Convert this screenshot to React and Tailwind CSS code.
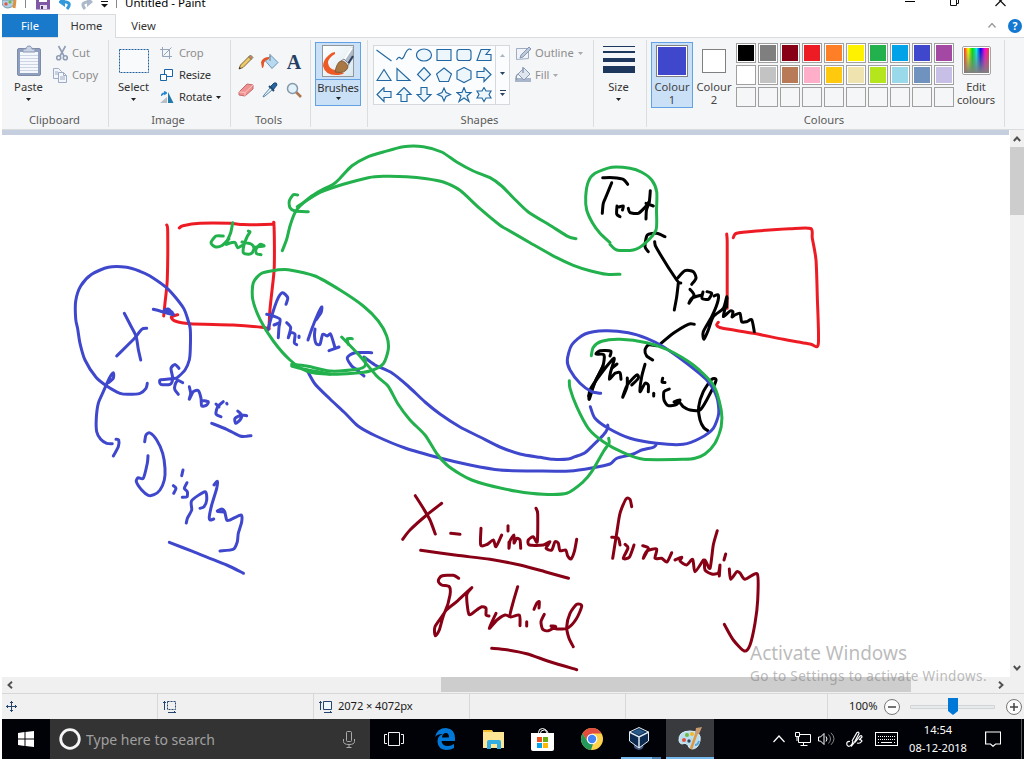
import React from "react";

const RED = "#ed1c24";
const BLUE = "#3f48cc";
const GREEN = "#22b14c";
const BLACK = "#000000";
const MAROON = "#880015";

// Turns "x,y x,y ..." into a smooth path that passes through every point.
function smooth(points) {
  const p = points.trim().split(/\s+/).map((s) => s.split(",").map(Number));
  let d = `M${p[0][0]} ${p[0][1]}`;
  for (let i = 0; i < p.length - 1; i++) {
    const a = p[i - 1] || p[i];
    const b = p[i];
    const c = p[i + 1];
    const e = p[i + 2] || c;
    const k = 8;
    d += `C${b[0] + (c[0] - a[0]) / k} ${b[1] + (c[1] - a[1]) / k} ${c[0] - (e[0] - b[0]) / k} ${c[1] - (e[1] - b[1]) / k} ${c[0]} ${c[1]}`;
  }
  return d;
}

const STROKES = [
  [RED, [
    "166.7,225 167.7,231 167.3,279 165,303 163.7,316",
    "179.3,228 183,225.7 200,223.3 230,223.3 243,224.5 271.7,224.3 273.7,222.7 274.3,236 274.3,266 273.3,279 270,309 269,328.7",
    "177.7,314.7 171.3,317 175,321 190,323.7 233,325 261.7,327.3 269,329",
    "726.7,234 727.2,241.7 727.2,275 727.2,308.3",
    "733.3,237.7 736.7,233.3 756.7,231 790,228.7 810.7,228.5 812.3,238.3 816,260 817.3,296.7 818.3,344 810,344 783.3,339.3 753.3,333.3 721.7,328 716.7,325 718.3,322.3",
  ]],
  [BLACK, [
    "602.7,177.7 613.3,177.7 623.3,179.3 627.7,184.3",
    "611.7,182.7 606.7,195 603.3,203.3 602.3,213.3",
    "617,206 616.7,214 620,216.7",
    "619,207 623.3,206 622.5,210",
    "628.3,208.3 630,212.7 638.3,213.3 645,207.3 649,202",
    "650.3,190.7 649.3,201.7 646.5,210 646,219",
    "646,203.3 653.3,206",
    "648.3,251.7 645,246.7 647.3,235 656.7,233.3 665,236.7",
    "654.7,241.7 656.7,248.3 676.7,280 680.7,283",
    "678.3,283.3 676.7,296.7 674.3,310",
    "677.3,278.3 685,270.7 693.3,271.7 696,278.3 691.7,284.3",
    "690,289.3 694,295 689,303.3 692,298 701.7,295",
    "703,292 702,298.3 708.3,299.3 711.7,293.3 707,291.7",
    "714,296 718.3,295 717.3,303.3 711.7,316.7 703.3,331.7 704,339.3 708.3,330 713.3,316.7 723.3,308.3 726.7,296.7 725.5,307 723.3,316.7 730,311 733,312 732,317 735,315 740,313.3 741.7,321.7 746.7,321.7 751.7,319.7 754.3,331.7",
    "727,298 726.5,307",
    "694.3,324.3 688.3,324.3 673.3,333.3 660,344.3",
    "656.7,345.7 648.3,345 645,350 646.7,356 652.7,360",
    "610,356 610.7,351 600,350.7 596,354 604,355 602.7,366.7 595,381.7 589.3,399.3 590,390 600,375 614,358.3 610.7,371.7 609.3,379.3 615,373.3 620,372.7 621,379.3",
    "603,366 597,378 588.7,396", "612,368 617,364",
    "627.3,378 627,387 622.7,397.3 627.3,385 636.7,375 638.3,378.3 631.7,385",
    "645,364.3 641.7,376.7 640,391.7 645,383.3 648.3,385 648.3,391.7",
    "653.7,393.3 653.7,396",
    "662.7,378.3 662,382 665,382.5",
    "669.3,389 664,391.7 664,400 668.3,405.7 676.7,404.3 680,400 674,402 680,403 683.3,406.7 690,410 700,410 706.7,400 716,380.7 711.7,379.3 703.3,391.7 698.7,406.7 700,420 704,428 708,430.7",
  ]],
  [BLUE, [
    "147.3,383.3 146,388.3 140,393.3 128.3,394.3 120,393.3 106.7,386 96,377.3 85,360 80,343.3 77.7,329 75.7,319 75.7,301 80.7,286 91.7,274.3 108.3,267.3 126.7,267.3 140,271.3 150,276 168.3,289.3 183.3,307.7 188.3,321 190.3,329.3 190.3,349.3 189.3,360 185,370 176.7,378.3",
    "124.3,313.3 130,324.3 136,336 138.3,349.3 140.7,360",
    "146.7,328.3 141.7,329.3 135,337.7 116.7,356",
    "153.3,309.3 160,311 173.3,314.8 168,309 164,311 172,312",
    "179,368.3 175,364.5 171,368.3 172.7,378.3 170,384.3 160.7,384.3 160,380 166.7,379.3 176,378.3",
    "182.7,382.7 178,380.5 175,385 175,390 178.3,394.3",
    "189.3,386.7 190.7,393.3 189.3,399.3 193.3,391.7 198.3,390.7 201,398.3 201.7,406 206.7,405 208.3,401.7 203.3,400.7",
    "223.3,401.7 217.7,406.7 216,414 221,416.7",
    "216,404 219,407", "226.7,403.3 227,404",
    "237.7,411 241.7,415 240,420 235.7,423.3 235,418.3 241.7,415 246.7,415.7",
    "211.7,423.3 226.7,429.3 240,436 246.7,436.3 251,435.7",
    "108,383 113.3,378.3 113.3,372.7 109.3,378.3 103.3,391.7 98.3,403.3 96.3,418.3 96.7,431.7 100.7,439.3 106.7,443.3 112.3,443.7",
    "116,439.3 118.7,440 118.3,446.7 113.3,456",
    "144.7,441.7 146,435 150,433 156.7,440 162.7,453.3 165,468.3 164.3,480 160,490 154,494.7 148.3,495.3 141.7,490 136.3,481.7 138.3,477.7 143.3,478.3 147.3,463.3 148,455.7",
    "173.3,485.7 176,488.3 173.7,493.3", "183,470 181.7,475.7",
    "187,482.7 184.3,488.3 187.3,491.7 187,496.7 182.3,497.3",
    "186.3,523 187.5,518 191.7,510 191.7,500.7 205,491.7 206.7,500 204,506.7 200,508.3",
    "214,485 217.3,481.3 216.7,488.3 211.7,505 209.3,516.7 210,520 213.7,519",
    "217.3,511 221.7,509 224.7,511.7 226.7,520 230,520 241,515 241.7,521.7 238.3,533.3 237.3,541.7 233.3,549.3 220,551",
    "218,511.500 224,512",
    "169.3,542.3 193.3,551.7 226.7,565 243.5,573.3",
    "286,304.3 287.7,297.7 282.7,292.7 278.3,297.7 272.7,312.7 267.7,330.3",
    "266.7,314.3 273.3,316 280,319.3 279,327 278.3,337.7", "274,325 279,323",
    "286.7,322.7 290.7,327.7 288.3,337.7 290.7,332.7 295,334.3 294.3,342.7 296.7,344.7", "299,336 299,337.5",
    "308,340 311.7,329.3 317,316 321.700,307 321,312.7 316,320",
    "315,329 314.5,336 316,343.3 320,344.3 322.7,334.3 327.3,336 330.7,334.3 335,347.7",
    "329,350.7 339,347",
    "371.7,352.7 355,352.7 347.3,357.7 351.7,366 357,370 364,376",
    "364,357 375,365 392,373 408,386 425,402 440,414 460,427 480,437 500,447 520,454 540,457.3 553.3,459.3 568.3,459 575,456.7 585,452.7 593.3,445 603.3,435 607.7,428.3 607.7,425",
    "307,370 315,384 330,399 345,413 358,426 376,436 405,448 440,458 470,465 500,470 540,471 570,471 591.7,468 610,464 616.7,458.3 633.3,454 641.7,450 653.3,447.3 656,445",
    "600.7,393.3 591.7,391.7 580,383.3 570,370 567.3,360 571.7,345 585,334 605,330.7 628.3,332.7 646.7,338.3 663.3,346.7 686.7,363.3 706.7,380 716.7,396.7 718.7,413.3 713.3,428.3 700,438.3 683.3,444.3 656.7,443.3 630,438.3 608.3,428.3 595,418.3 590.3,406.7",
  ]],
  [GREEN, [
    "223.3,236 216,236 211,242.7 215,246.7 222,245.5 229,239",
    "232.7,222.7 230.7,232.7 226,244 230,243 235,242.5 237.7,247.7 243,245",
    "242,242 251,244 254,248 252,253 248.3,254.3 243.3,252.7 244,245 247,237 250,232 248.3,231",
    "256,247 264,246 260,244.3 256,249.3 256.7,253.7 261,254.7",
    "282.3,250.7 286.7,239.3 290,226 295,212.7 300,206 311.7,196 321.7,190 333.3,184.3 340,178.3 351.7,166 366.7,157.3 383.3,152 403.3,146.7 423.3,146.7 441.7,152 456.7,162 473.3,171 490,177.7 501.7,186 513.3,197.7 528.3,212 550,225.3 568.3,236.7 576,238.7",
    "297.3,206.7 320,192.5 343.3,184.3 368.3,177.7 383.3,176.3 406.7,176.7 426.7,178.7 443.3,182 460,190.3 480,208.7 500,225.3 506.7,229.3 530,242.7 556.7,257.7 573.3,265.3 590,270.7 606.7,274.3 620,274.3",
    "297.7,195 293.3,194.7 289.3,201 290,207.7 295,211 308.3,211.7",
    "276.7,270 261.7,273.3 253.3,282.7 252.7,299.3 260,319.3 273.3,341 290,360 306.7,371 330,374.3 353.3,373.3 370,371 383.3,363.7 388.3,349.3 386.7,336 378.3,321 363.3,306 340,290 315,276 288.3,269.7 276.7,270",
    "291.7,364.3 306.7,366 330,371 356.7,369.3 365,366 365,357.7",
    "291.7,366 303,369 330,374",
    "341.7,337 358.3,354.3 376.7,376 388,386 398,404 410,420 425,435 437,454 447,465 460,474 471.7,480 486.7,484.7 516.7,491.3 543,494.3 566.7,493.3 583.3,481.7 591.7,471.7 603.3,451.7 609,443.3 608.7,438.3",
    "352.3,338.7 347.3,338.7 348.3,344.3",
    "610,242.7 600,233.3 592.7,223.3 586.7,210 585.7,196.7 588.3,181.7 595,173.3 611.7,167.3 630,168.3 641.7,172.3 651.7,180 656.7,191.7 656.5,210 656,230 645,243.3 633.3,250 616.7,250 610,244.3",
    "591.3,355.7 593.3,347.3 601.7,341.3 620,339.3 646.7,342.7 668.3,350 693.3,365 713.3,385 721.2,410 721.2,426.7 715,443.3 705,454 695,458.3 685,459.3 643.3,459.3 623.3,452.7 603.3,441.7 588.3,428.3 576.7,406.7 570,388.3 569.3,380.7",
  ]],
  [MAROON, [
    "415.3,495.7 423.3,508.3 430,520 435.3,534",
    "441.7,503.3 426.7,515 410,530 402.7,539.3", "450.7,533.3 460,534.3",
    "481,528.3 480.7,545 487,544.5 493.3,540 496,546.7 501.7,535",
    "508,525.7 508,531", "509,542 509,548.3 510,541 514,535 514,543 516.7,538.3 520,540 520.7,548.3",
    "536,508.3 537.7,514 537.3,541.7 533.3,536.7 528.3,540 529.3,545 543.3,545 550,541.7 546,548.3 551.7,550 555,541.7 558.3,543.3 560,550.7 565.7,550 567.7,556 571,559 574.3,551.7 576.7,539.3",
    "420.7,550.3 456.7,555.3 490,559.3 520,565 545,571.7 568.5,578.3",
    "458.7,578.3 453.3,575.3 441.7,576 438.3,581 441.7,585 449.3,586.7 450,595 445,611.7 435,626.7 435.3,635.7 439.3,630 445,611.7 456.7,601.7 471.7,587.7 466.7,595 469,614.3 476.7,610 481.7,606.7 486,608.3 486,615 489,616",
    "496,613.3 489.3,628.3 497,620 505,615 510,616.7", "517.7,586.7 513.3,601.7 510,616.7 519.3,615 520,625.7",
    "526.7,621.7 526.7,626", "534,609.3 536.7,603.3 539.3,601.7 539,608",
    "544.3,614.3 541,621.7 542.7,629.3 548.3,630.7 555.7,626.7 551,626 557,629 568.3,627.7 576.7,618.3 581.7,606 576.7,604.3 570,613.3 566.7,626.7 569,638.3 573.3,646.7",
    "491.7,648.3 506.7,649.7 526.7,653.7 550,661.7 576.7,669.7",
    "631.7,506.7 630,499.3 626,499 620,513.3 616.7,533.3 612.7,558.3",
    "611.7,537.3 618.3,538.3 620,545",
    "625,544.3 628,548 623.3,558.3 629.3,557.3 634,545",
    "642.7,545.7 648.3,548.3 643.3,558.3 647,551 656.7,549 655,558.3 661.7,558.3 667,562 671.7,552.7",
    "675,560 681.7,557.3 680,561 686.7,565 692.7,559.3 695,571.7 703.3,560",
    "717.3,530.7 713.3,545 710,568.3 705,560 705,570 711.7,574 718.3,573 720,565 719.3,576",
    "725.7,554 724,560",
    "729.3,569 730.7,579.3 736.7,571.7 740,573 745,579.3 757.3,574 757.7,600 755,623.3 750,645 744.3,651 733.3,640 724.3,624.3",
  ]],
];

function Drawing() {
  return (
    <svg className="block h-[542px] w-[1008px] shrink-0" viewBox="2 135 1008 542" fill="none" strokeWidth="3" strokeLinecap="round" strokeLinejoin="round">
      {STROKES.map(([color, lines]) => (
        <g key={color} stroke={color}>
          {lines.map((l) => <path key={l} d={smooth(l)} />)}
        </g>
      ))}
    </svg>
  );
}

function Caret({ className = "text-[#222]" }) {
  return <svg className={`h-[3px] w-[5px] shrink-0 ${className}`} viewBox="0 0 5 3"><path d="M0 0h5L2.5 3z" fill="currentColor" /></svg>;
}

function Group({ label, className, labelClass = "", children }) {
  return (
    <section className={`mt-[2px] flex h-[87px] shrink-0 flex-col border-r border-[#dcdddf] ${className}`}>
      <div className="flex h-[74px] items-start">{children}</div>
      <div className={`text-center leading-[12px] text-[#5a5a5a] ${labelClass}`}>{label}</div>
    </section>
  );
}

function Row({ icon, text, caret, muted }) {
  return (
    <div className={`flex h-[22px] items-center ${muted ? "text-[#8d8d8d]" : "text-[#333]"}`}>
      <span className="flex w-[19px] items-center">{icon}</span>
      <span>{text}</span>
      {caret && <span className="ml-1"><Caret className={muted ? "text-[#aaa]" : "text-[#222]"} /></span>}
    </div>
  );
}

const PasteIcon = () => (
  <svg className="h-8 w-[26px]" viewBox="0 0 26 32">
    <rect x="1.5" y="3.5" width="23" height="27" rx="1.5" fill="#8e9fc0" stroke="#7d8ba7" />
    <rect x="4" y="7" width="18" height="21" fill="#f4f7fb" />
    <path d="M4 10.5h18M4 13.5h18M4 16.5h18M4 19.5h18M4 22.5h18M4 25.5h18" stroke="#cbd5e4" />
    <path d="M7 7V4h3c0-4 6-4 6 0h3v3z" fill="#c9d2e2" stroke="#8897b2" />
  </svg>
);
const CutIcon = () => (
  <svg className="-ml-px h-4 w-4" viewBox="0 0 16 16" fill="none" stroke="#8f9db6" strokeWidth="1.6">
    <path d="M4.5 1 10 11M11.5 1 6 11" /><circle cx="4.7" cy="12.7" r="2" /><circle cx="11.3" cy="12.7" r="2" />
  </svg>
);
const CopyIcon = () => (
  <svg className="-ml-[1px] h-4 w-4" viewBox="0 0 16 16" fill="#f3f6fb" stroke="#9eabc4">
    <path d="M1.5 1.5h5l3 3v7h-8z" /><path d="M6.500 5.500h5l3 3v7h-8z" /><path d="M11.500 5.500v3h3M3 5h3M3 7h3M8 10h5M8 12h5" fill="none" />
  </svg>
);
const SelectIcon = () => (
  <svg className="h-6 w-[30px]" viewBox="0 0 30 24"><rect x=".5" y=".5" width="29" height="23" fill="#f8fafc" stroke="#1e5f9c" strokeDasharray="2 1" /></svg>
);
const CropIcon = () => (
  <svg className="h-3 w-3" viewBox="0 0 12 12" fill="none" stroke="#96a4bc"><path d="M2.500 0v9.500H12M0 2.500h9.500V12M3.500 8.500 11.500.500" /></svg>
);
const ResizeIcon = () => (
  <svg className="h-3 w-[13px]" viewBox="0 0 13 12" fill="#fff" stroke="#1764a7"><path d="M4.500.500h8v7h-8z" /><path d="M.500 5.500h6v6h-6z" /></svg>
);
const RotateIcon = () => (
  <svg className="h-[13px] w-[14px]" viewBox="0 0 14 13"><path d="M0 12h7V6z" fill="#b9bec5" /><path d="M8 12V1l5.500 11z" fill="#2278a8" /><path d="M1.500 5V3.500Q1.500 2 4 2h1.500M4.500.300v3.400L7 2z" fill="#1b80d0" stroke="#1b80d0" strokeWidth=".8" /></svg>
);

function Tools() {
  return (
    <div className="grid grid-cols-[repeat(3,24px)] grid-rows-[repeat(2,28px)] place-items-center pt-[8px] pl-[3px]">
      <svg className="h-4 w-4" viewBox="0 0 16 16"><path d="m1 15 1.500-4L11 2.500 13.500 5 5 13.500z" fill="#edc968" stroke="#7c6441" /><path d="m10.500 3 2-2 2.500 2.500-2 2z" fill="#d77868" stroke="#758b54" /><path d="m1 15 2-.7-1.300-1.300z" fill="#222" /></svg>
      <svg className="h-4 w-[18px]" viewBox="0 0 18 16"><path d="M4.500 7 10 1.500l7 7-6 6z" fill="#b8daf0" stroke="#6a91b5" /><path d="M9 0v7" stroke="#637e99" /><path d="M8 3Q2 3 0 8L1 14Q3 14 3 9 4 6 8 5z" fill="#e65527" /></svg>
      <span className="h-[20px] font-['Liberation_Serif',serif] text-[20px] leading-[20px] font-bold text-[#243e64]">A</span>
      <svg className="h-[14px] w-4" viewBox="0 0 16 14"><path d="m1 9 8-8 6 1v4l-8 7-6-1z" fill="#ef9292" stroke="#c4686b" /><path d="m1 9 6 .5L15 2M7 9.500V13" stroke="#ffc4c0" fill="none" /></svg>
      <svg className="h-4 w-4" viewBox="0 0 16 16"><path d="m8 5 4-4q3-1 3 2l-4 5z" fill="#28659e" stroke="#184c7c" /><path d="m7 4 5 5" stroke="#23496e" strokeWidth="2" /><path d="m8 6-6 7-1 2 2-1 7-6z" fill="#e7f4fb" stroke="#5786a7" /></svg>
      <svg className="-ml-px h-4 w-4" viewBox="0 0 16 16"><path d="m10 10 5 5" stroke="#ac7854" strokeWidth="2.600" /><circle cx="6.500" cy="6.500" r="5" fill="#e1f2fb" stroke="#8697a8" strokeWidth="1.500" /></svg>
    </div>
  );
}

const SHAPES = [
  "M0 3 15 14", "M0 13Q2 9 4 11 6 14 9 6 12 0 15 3", "M15 8A7.500 6 0 1 1 0 8a7.500 6 0 1 1 15 0z", "M.500 2.500h14v11h-14z", "M3 2.500h9q2.500 0 2.500 2.500v6q0 2.500-2.500 2.500H3Q.500 13.500.500 11V5Q.500 2.500 3 2.500z", "M.500 13.500 4.500 2.500h9L9.500 7.500h5v6z",
  "M.500 13.500 7.500 2.500l7 11z", "M.500 1.500v12h13z", "M7.500.500 14 7.500 7.500 14 1 7.500z", "M7.500 1 15 7l-3 7.500H3L0 7z", "M7.500.500 14.500 4v8l-7 3.500L.500 12V4z", "M.500 4.500h7v-4L14.500 7.500l-7 7v-4h-7z",
  "M14.500 4.500h-7v-4L.500 7.500l7 7v-4h7z", "M4.500 14.500v-7h-4L7.500.500l7 7h-4v7z", "M4.500.500v7h-4l7 7 7-7h-4v-7z", "M7.500 1 9.500 5.500 14 7.500 9.500 9.500 7.500 14 5.500 9.500 1 7.500 5.500 5.500z", "M7.500.500 9.500 5.500h5l-4 3.500 2 5.500-5-3.500-5 3.500 2-5.500-4-3.500h5z", "M7.500.500 9.500 4h5L12.500 7.500l2 3.500h-5l-2 3.500-2-3.500h-5l2-3.500L.500 4h5z",
];

function ShapeGallery() {
  return (
    <div className="mt-[5px] ml-[5px] flex h-[60px] w-[137px] shrink-0 border border-[#d5d8dc] bg-[#fafcfe]">
      <div className="grid w-[121px] shrink-0 grid-cols-[repeat(6,20px)] grid-rows-[repeat(3,20px)] pl-[2px]">
        {SHAPES.map((d) => (
          <svg key={d} className="mt-px h-[16.500px] w-[17px]" viewBox="-.5 0 17 16.500" fill="#edf6fb" stroke="#2267a1" strokeWidth="1.150"><path d={d} fill={d === SHAPES[0] || d === SHAPES[1] ? "none" : undefined} /></svg>
        ))}
      </div>
      <div className="flex w-[14px] flex-col items-center justify-around border-l border-[#d5d8dc]">
        <span className="flex rotate-180"><Caret className="text-[#aab3c0]" /></span>
        <Caret className="text-[#2c4262]" />
        <span className="flex flex-col items-center gap-[2px]"><i className="h-px w-[6px] bg-[#2c4262]" /><Caret className="text-[#2c4262]" /></span>
      </div>
    </div>
  );
}

const OutlineIcon = () => (
  <svg className="-ml-[1px] h-[15px] w-[17px]" viewBox="0 0 17 15"><path d="M1.500 2.500h12v10l-12 1z" fill="#f0f3f8" stroke="#9facc4" /><path d="m5 12 1-3 8-8 2 2-8 8z" fill="#bdc8da" stroke="#8797b3" /></svg>
);
const FillIcon = () => (
  <svg className="-ml-[1px] h-[16px] w-[17px]" viewBox="0 0 17 16"><path d="M0 11h16v4H0z" fill="#a8b5ca" /><path d="m3 7 6-6 6 6-6 6z" fill="#dfe6ef" stroke="#8b9bb5" /><path d="M8 0v6M3 7Q0 9 2 13" stroke="#8e9db6" fill="none" strokeWidth="1.500" /></svg>
);

function BrushIcon() {
  return (
    <svg className="h-8 w-8" viewBox="0 0 32 32">
      <defs><linearGradient id="brushBg" x2="1" y2="1"><stop stopColor="#fff" /><stop offset="1" stopColor="#d9e8ef" /></linearGradient></defs>
      <rect x=".5" y=".5" width="31" height="31" fill="url(#brushBg)" stroke="#949799" />
      <path d="M13 7Q10 7 7 10 1 15 1 21 3 30 14 30 20 30 22 28L13 25Q7 24 6 18 6 13 13 9z" fill="#ee5a26" />
      <path d="m21 15 9-13 1 1v11l-6 6z" fill="#aeb9ca" /><path d="m22 15 8-12" stroke="#fff" strokeWidth="2" /><path d="m26 19 5-8" stroke="#30425e" strokeWidth="2" />
      <path d="m19 16 3-2 5 5-2 3z" fill="#e3e6e9" stroke="#7a8894" />
      <path d="M13 27Q15 17 19 16q5 0 7 6-2 7-13 5z" fill="#a97843" stroke="#855c35" />
    </svg>
  );
}

const PALETTE = [
  ["k1", "bg-[#000000]"], ["k2", "bg-[#7f7f7f]"], ["k3", "bg-[#880015]"], ["k4", "bg-[#ed1c24]"], ["k5", "bg-[#ff7f27]"], ["k6", "bg-[#fff200]"], ["k7", "bg-[#22b14c]"], ["k8", "bg-[#00a2e8]"], ["k9", "bg-[#3f48cc]"], ["k10", "bg-[#a349a4]"],
  ["l1", "bg-[#ffffff]"], ["l2", "bg-[#c3c3c3]"], ["l3", "bg-[#b97a57]"], ["l4", "bg-[#ffaec9]"], ["l5", "bg-[#ffc90e]"], ["l6", "bg-[#efe4b0]"], ["l7", "bg-[#b5e61d]"], ["l8", "bg-[#99d9ea]"], ["l9", "bg-[#7092be]"], ["l10", "bg-[#c8bfe7]"],
];
const EMPTY = ["m1", "m2", "m3", "m4", "m5", "m6", "m7", "m8", "m9", "m10"];

function Ribbon() {
  return (
    <div className="flex h-[93px] w-[1022px] shrink-0 border-y border-[#dadbdc] bg-[#f5f6f7]">
      <Group label="Clipboard" className="w-[107px]" labelClass="pr-px">
        <div className="flex w-[53px] shrink-0 flex-col items-center pt-[5px]">
          <PasteIcon /><span className="mt-px leading-[18px] text-[#333]">Paste</span><span className="mt-[2px] flex"><Caret /></span>
        </div>
        <div className="-ml-[2px] pt-[2px]"><Row muted text="Cut" icon={<span className="ml-[2px] flex"><CutIcon /></span>} /><Row muted text="Copy" icon={<CopyIcon />} /></div>
      </Group>
      <Group label="Image" className="w-[122px]" labelClass="pr-[3px]">
        <div className="flex w-[49px] flex-col items-center pt-[9px]">
          <SelectIcon /><span className="mt-[5px] leading-[18px] text-[#333]">Select</span><span className="mt-[2px] flex"><Caret /></span>
        </div>
        <div className="pt-[2px] pl-[2px] tracking-[-0.2px]"><Row muted text="Crop" icon={<CropIcon />} /><Row text="Resize" icon={<ResizeIcon />} /><Row text="Rotate" caret icon={<RotateIcon />} /></div>
      </Group>
      <Group label="Tools" className="w-20" labelClass="pr-1"><Tools /></Group>
      <Group label="" className="w-[57px]">
        <div className="mt-[2px] ml-[4px] flex h-16 w-[46px] shrink-0 flex-col items-center border border-[#62a2e4] bg-[#c9e0f7] tracking-[-0.2px]">
          <div className="flex h-[37px] w-full justify-center border-b border-[#62a2e4] pt-[2px]"><BrushIcon /></div>
          <span className="leading-[15px] whitespace-nowrap text-[#333]">Brushes</span><span className="mt-[2px] flex"><Caret /></span>
        </div>
      </Group>
      <Group label="Shapes" className="w-[226px]" labelClass="pr-[2px]">
        <ShapeGallery />
        <div className="pt-[2px] pl-[6px]"><Row muted caret text="Outline" icon={<OutlineIcon />} /><Row muted caret text="Fill" icon={<FillIcon />} /></div>
      </Group>
      <Group label="" className="w-[53px]">
        <div className="flex w-[49px] flex-col items-center pt-[6px]">
          <div className="flex h-[27px] w-8 flex-col justify-between">
            <i className="h-px bg-[#1d375d]" /><i className="h-[2px] bg-[#1d375d]" /><i className="h-[4px] bg-[#1d375d]" /><i className="h-[7px] bg-[#1d375d]" />
          </div>
          <span className="mt-[5px] leading-[18px] text-[#333]">Size</span><span className="mt-[2px] flex"><Caret /></span>
        </div>
      </Group>
      <Group label="Colours" className="w-[358px]" labelClass="pr-[3px]">
        <div className="mt-[2px] ml-[4px] flex h-[66px] w-[42px] shrink-0 flex-col items-center border border-[#62a2e4] bg-[#c9e0f7] pt-[2px]">
          <div className="h-8 w-8 shrink-0 border border-[#808080] bg-[#3f48cc] ring-1 ring-white ring-inset" />
          <span className="mt-[3px] text-center leading-[13px] text-[#444]">Colour<br />1</span>
        </div>
        <div className="flex w-[43px] shrink-0 flex-col items-center pt-[9px] pr-px">
          <div className="h-6 w-6 border border-[#808080] bg-white" />
          <span className="mt-[7px] text-center leading-[13px] text-[#444]">Colour<br />2</span>
        </div>
        <div className="grid shrink-0 grid-cols-[repeat(10,20px)] grid-rows-[repeat(3,20px)] gap-[2px] pt-[3px]">
          {PALETTE.map(([id, bg]) => <span key={id} className="flex border border-[#a0a0a0] bg-white p-px"><i className={`flex-1 ${bg}`} /></span>)}
          {EMPTY.map((id) => <span key={id} className="border border-[#a0a0a0]" />)}
        </div>
        <div className="flex w-[44px] shrink-0 flex-col items-center pt-[6px]">
          <div className="flex h-[29px] w-[29px] shrink-0 rounded-[2px] border border-[#a5a5a5] bg-white p-px">
            <div className="flex-1 bg-[linear-gradient(to_top,#808080,transparent),linear-gradient(to_right,#ff2020,#ff0,#0d0,#0ee,#00e,#f0d,#f33)]" />
          </div>
          <span className="mt-[5px] text-center leading-[13px] tracking-[-0.1px] text-[#444]">Edit<br />colours</span>
        </div>
      </Group>
    </div>
  );
}

function TitleBar() {
  return (
    <header className="flex h-[14px] w-[1022px] shrink-0 items-start overflow-hidden">
      <svg className="h-[9px] w-[15px]" viewBox="0 0 15 9"><path d="M0 0h13Q13 7 6 8 1 8 0 3z" fill="#acd0e5" stroke="#7b99aa" /><circle cx="4" cy="4" r="1.700" fill="#e3564b" /><circle cx="8" cy="2" r="1.500" fill="#68ba3f" /><path d="m13 0-1 8" stroke="#df9141" strokeWidth="3" /></svg>
      <i className="ml-[8px] h-[8px] w-px bg-[#888]" />
      <svg className="ml-[10px] h-[11px] w-[15px]" viewBox="0 0 15 11"><path d="M0 0h14v9.500H0z" fill="#8058a5" /><path d="M3 0h8v2H3z" fill="#fff" /><path d="M4 5h7v4H4z" fill="#e7dfed" /><path d="M5 6h2v3H5z" fill="#4d346b" /></svg>
      <svg className="ml-[8px] h-[11px] w-[15px]" viewBox="0 0 15 11" fill="none"><path d="M2 2h5Q13 3 8 9" stroke="#3299dc" strokeWidth="3" /><path d="M6-4-1 2l7 5z" fill="#3299dc" /></svg>
      <svg className="ml-[6px] h-[11px] w-[15px]" viewBox="0 0 15 11" fill="none"><path d="M11 2H7Q0 3 5 9" stroke="#acb9cb" strokeWidth="3" /><path d="m7-4 6 6-6 5z" fill="#acb9cb" /></svg>
      <svg className="ml-[6px] h-[8px] w-[7px]" viewBox="0 0 7 8"><path d="M0 1.500h7" stroke="#111" /><path d="M0 4h7L3.500 7.500z" fill="#111" /></svg>
      <i className="ml-[8px] h-[8px] w-px bg-[#888]" />
      <span className="-mt-[6px] ml-[8px] text-[11.500px] leading-[18px] whitespace-nowrap text-black">Untitled - Paint</span>
      <div className="mr-[18px] ml-auto flex gap-[35px]">
        <i className="mt-px h-px w-[10px] bg-black" />
        <svg className="h-[7px] w-[10px]" viewBox="0 0 10 7" fill="none" stroke="#111"><path d="M.500-2v7.500h6V-1M8.500-1v4.500h-2" /></svg>
        <svg className="h-[7px] w-[11px]" viewBox="0 0 11 7" fill="none" stroke="#111" strokeWidth="1.200"><path d="m5.500 1-5 5M5.500 1l5 5M3-1.500 5.500 1 8-1.500" /></svg>
      </div>
    </header>
  );
}

function Tabs() {
  return (
    <nav className="z-10 -mb-px flex h-[24px] w-[1022px] shrink-0 text-[#333]">
      <span className="h-[23px] w-14 bg-[#1979ca] text-center leading-[24px] text-white">File</span>
      <span className="h-[24px] w-[58px] border-t border-r border-[#dadbdc] bg-[#f5f6f7] text-center leading-[22px]">Home</span>
      <span className="w-[55px] text-center leading-[24px]">View</span>
      <div className="mr-[2px] ml-auto flex items-center gap-[12px] pb-px">
        <svg className="h-[5px] w-[8px]" viewBox="0 0 8 5"><path d="m.5 4.500 3.500-4 3.500 4" fill="none" stroke="#999" strokeWidth="1.300" /></svg>
        <span className="h-[14px] w-[14px] rounded-full bg-[#1477d0] text-center text-[10.500px] leading-[14px] font-bold text-white">?</span>
      </div>
    </nav>
  );
}

function Chevron({ className = "" }) {
  return <svg className={`h-[8px] w-[8px] ${className}`} viewBox="0 0 8 8"><path d="M6 .8 2.500 4 6 7.200" fill="none" stroke="#505050" strokeWidth="1.900" /></svg>;
}

function Workspace() {
  return (
    <div className="flex h-[547px] shrink-0">
      <div className="flex w-[1007px] flex-col overflow-hidden bg-white">
        <div className="h-[5px] shrink-0 bg-[#c5cfe0]" />
        <Drawing />
      </div>
      <div className="flex w-[15px] flex-col items-center border-l border-white bg-[#f0f0f0]">
        <div className="flex h-[17px] items-center pt-px"><Chevron className="rotate-90" /></div>
        <div className="h-[68px] w-full bg-[#cdcdcd]" />
        <div className="mt-auto flex h-[18px] items-center"><Chevron className="-rotate-90" /></div>
      </div>
    </div>
  );
}

function StatusBar() {
  return (
    <footer className="flex h-[26px] shrink-0 border-t border-[#d7d7d7] bg-[#f0f0f0] text-[#1a1a1a]">
      <div className="flex w-[156px] items-center border-r border-[#d8d8d8] pl-[4px]">
        <svg className="h-[11px] w-[11px]" viewBox="0 0 11 11" fill="none" stroke="#25456d"><path d="M5.500 0v11M0 5.500h11M4 1.500h3M4 9.500h3M1.500 4v3M9.500 4v3" /></svg>
      </div>
      <div className="flex w-[156px] items-center border-r border-[#d8d8d8] pl-[5px]">
        <svg className="h-3 w-[13px]" viewBox="0 0 13 12" fill="none" stroke="#25456d"><path d="M1.500 0v9M0 1.500h3M5 11.500h8M11.500 10v2" /><path d="M4.500.500h8v8h-8z" strokeDasharray="2 1" /></svg>
      </div>
      <div className="flex w-[156px] items-center border-r border-[#d8d8d8] pl-[5px]">
        <svg className="h-3 w-[13px]" viewBox="0 0 13 12" fill="#f0f8ff" stroke="#25456d"><path d="M1.500 0v9M0 1.500h3M5 11.500h8M11.500 10v2M4.500.500h8v8h-8z" /></svg>
        <span className="ml-[6px] tracking-[-0.1px]">2072 × 4072px</span>
      </div>
      <div className="w-[156px] border-r border-[#d8d8d8]" />
      <div className="w-[202px] border-r border-[#d8d8d8]" />
      <div className="flex flex-1 items-center pl-[21px]">
        <span className="w-[35px]">100%</span>
        <svg className="h-4 w-4 shrink-0" viewBox="0 0 16 16" fill="#fcfcfc" stroke="#777"><circle cx="8" cy="8" r="7.500" /><path d="M4 8h8" stroke="#444" strokeWidth="1.500" /></svg>
        <svg className="ml-[10px] h-[18px] w-[85px] shrink-0" viewBox="0 0 85 18"><path d="M.500 7.500h84v3H.500z" fill="#e7eaea" stroke="#d2d5d7" /><path d="M38 0h10v13l-5 4-5-4z" fill="#0078d7" /></svg>
        <svg className="ml-[11px] h-4 w-4 shrink-0" viewBox="0 0 16 16" fill="#fcfcfc" stroke="#777"><circle cx="8" cy="8" r="7.500" /><path d="M4 8h8M8 4v8" stroke="#444" strokeWidth="1.500" /></svg>
      </div>
    </footer>
  );
}

function Taskbar() {
  return (
    <div className="flex h-10 w-[1022px] shrink-0 items-center bg-[#010207]">
      <span className="flex w-12 shrink-0 justify-center">
        <svg className="h-4 w-4" viewBox="0 0 16 16" fill="#fff"><path d="m0 2 6.500-1v6.500H0zM7.500 1 16 0v7.500H7.500zM0 8.500h6.500V15L0 14zM7.500 8.500H16V16l-8.500-1z" /></svg>
      </span>
      <div className="flex h-10 w-[320px] shrink-0 items-center bg-[#333]">
        <svg className="ml-[9px] h-[22px] w-[22px]" viewBox="0 0 22 22"><circle cx="11" cy="11" r="9.300" fill="none" stroke="#f5f5f5" strokeWidth="2.800" /></svg>
        <span className="ml-[5px] pt-px text-[14px] leading-[22px] text-[#a0a0a0]">Type here to search</span>
        <svg className="mr-[15px] ml-auto h-[17px] w-[12px]" viewBox="0 0 12 17" fill="none" stroke="#aaa"><rect x="3.500" y=".5" width="5" height="10" rx="1" /><path d="M.500 8v2.500q0 3 5.500 3t5.500-3V8M6 13.500V16M3.500 16.500h5" /></svg>
      </div>
      <span className="flex w-12 shrink-0 justify-center">
        <svg className="h-[15px] w-5" viewBox="0 0 20 15" fill="none" stroke="#f2f2f2"><path d="M4.500.500h11v13h-11zM3 2.500H.500v9H3M17 2.500h2.500v9H17" /></svg>
      </span>
      <span className="flex w-[54px] shrink-0 justify-center">
        <svg className="h-[22px] w-[20px]" viewBox="0 0 20 22"><path d="M0 9Q2 0 11 0q9 1 9 10v3H6.500q.5 5 6.500 5 3 0 6-2v4q-3 2-8 2Q3 21 2.500 14 2 8 8 6 2 6 0 9zm7 .5h7Q14 5 11 5 7.500 5 7 9.500z" fill="#0078d7" fillRule="evenodd" /></svg>
      </span>
      <span className="flex w-11 shrink-0 justify-center">
        <svg className="h-[19px] w-[22px]" viewBox="0 0 22 19"><path d="M0 0h9l1 2h11v16H0z" fill="#ffe694" /><path d="M0 0h9v2H0z" fill="#f4bf2e" /><path d="M4 19v-7q0-2 2-2h10q2 0 2 2v7h-4v-5H8v5z" fill="#34ade2" /></svg>
      </span>
      <span className="flex w-[53px] shrink-0 justify-center">
        <svg className="h-[23px] w-[23px]" viewBox="0 0 23 23"><path d="M7.500 7V4.500q0-4 4-4t4 4V7M9.500 5q0-3 4-3 3 0 3.500 3" fill="none" stroke="#fff" /><path d="M0 5h23v16q0 2-2 2H2q-2 0-2-2z" fill="#fff" /><path d="M6 9h5v5H6z" fill="#f25022" /><path d="M12 9h5v5h-5z" fill="#6aae12" /><path d="M6 15h5v5H6z" fill="#00a4ef" /><path d="M12 15h5v5h-5z" fill="#ffb900" /></svg>
      </span>
      <span className="flex w-[46px] shrink-0 justify-center">
        <svg className="h-[22px] w-[22px]" viewBox="0 0 22 22"><circle cx="11" cy="11" r="11" fill="#fdd34b" /><path d="M1.500 5.500A11 11 0 0 1 20.500 5.500H11L7 14z" fill="#e14d3e" /><path d="M1.500 5.500 7 14l5 2-2 6A11 11 0 0 1 1.500 5.500z" fill="#24985a" /><circle cx="11" cy="11" r="5.300" fill="#fff" /><circle cx="11" cy="11" r="4.200" fill="#4285f4" /></svg>
      </span>
      <span className="ml-[6px] flex h-10 w-[40px] shrink-0 flex-col items-center justify-between pt-[8px]">
        <svg className="-ml-[4px] h-[23px] w-[20px]" viewBox="0 0 20 23"><path d="M5 18q-1 4 5 5 6-1 4-6" fill="#40567e" /><path d="m10 .5 9.500 4.500v9l-9.500 7-9.500-7V5z" fill="#0d2a51" stroke="#e3edf5" /><path d="m0 5 10 5L20 5M10 10v11" fill="none" stroke="#dfe9f2" strokeWidth="1.500" /><path d="m3 5 7-3 6 3-6 3z" fill="#285886" /></svg>
        <i className="flex h-[2px] w-full bg-[#76b9ed]"><b className="ml-auto w-[9px] bg-[#4c7fab]" /></i>
      </span>
      <span className="ml-[5px] flex h-10 w-12 shrink-0 flex-col items-center justify-between bg-[#393a3d] pt-[8px]">
        <svg className="h-6 w-6" viewBox="0 0 24 24"><path d="M1 14Q0 4 12 4t10 10q-2 8-8 8-4-1-4-4-3-3-6-1-2 0-3-3z" fill="#b8deef" stroke="#d7edf7" /><circle cx="6" cy="13" r="2" fill="#e44e3a" /><circle cx="9" cy="8" r="2" fill="#72b944" /><circle cx="14" cy="7" r="2" fill="#f3b72a" /><circle cx="11" cy="14" r="1.700" fill="#33465b" /><path d="M17 18q3 0 4-4" stroke="#5ba5d4" strokeWidth="2" fill="none" /><path d="m13 22 6-17" stroke="#e19640" strokeWidth="2.500" /><path d="m17 7 1-6 6-1-3 7z" fill="#c99a70" /></svg>
        <i className="h-[2px] w-full bg-[#76b9ed]" />
      </span>
      <div className="ml-[59px] flex shrink-0 items-center text-white">
        <svg className="h-[8px] w-[12px]" viewBox="0 0 12 8" fill="none" stroke="#fff" strokeWidth="1.200"><path d="m.5 7 5.500-6 5.500 6" /></svg>
        <svg className="ml-[10px] h-[14px] w-4" viewBox="0 0 16 14" fill="none" stroke="#fff"><path d="M5 2.500h10.500v8H3.500v-6M8.500 11v2M5.500 13.500h7" /><path d="M.500.500h4v4h-4zM2 4v5" /></svg>
        <svg className="ml-[7px] h-[14px] w-[17px]" viewBox="0 0 17 14" fill="none" stroke="#fff"><path d="M.500 5h2L6 1.500v11L2.500 9h-2zM8 4.500q2 2.500 0 5" /><path d="M10.500 2.500q4 4.500 0 9M13 .800q6 6 0 12" stroke="#888" /></svg>
        <svg className="ml-[11px] h-[17px] w-[17px]" viewBox="0 0 17 17" fill="none" stroke="#fff" strokeWidth="1.200"><path d="M4 10.500Q0 10 1 14q2 3 5-1l1-3M6 10 11 1.500q2-1 2 1L8 12l-3 3.500M9 11.500 14 5q2-1 2 1l-3 3M11 12q3 1 5-2l-2-2" /></svg>
        <svg className="ml-[12px] h-[14px] w-[23px]" viewBox="0 0 23 14" fill="none" stroke="#fff"><rect x=".5" y=".5" width="22" height="13" /><path d="M3 4.500h17M3 7.500h17" strokeDasharray="1 1" /><path d="M6 10.500h11M3 10.500h1M19 10.500h1" /></svg>
        <div className="ml-[8px] flex w-[64px] flex-col text-center text-[11.100px] leading-[18px] whitespace-nowrap"><span>14:54</span><span>08-12-2018</span></div>
        <svg className="ml-[15px] h-4 w-4" viewBox="0 0 16 16" fill="none" stroke="#fff" strokeWidth="1.200"><path d="M.600 1h15v12h-5L8 15.300 5.500 13H.600z" /></svg>
        <i className="ml-[20px] h-10 w-px bg-[#555]" />
      </div>
    </div>
  );
}

export default function App() {
  return (
    <div className="relative flex h-[768px] w-[1024px] flex-col overflow-hidden bg-white pl-[2px] font-['Noto_Sans','Open_Sans',sans-serif] text-[11.200px]">
      <TitleBar />
      <Tabs />
      <Ribbon />
      <Workspace />
      <div className="flex h-[16px] shrink-0 items-center bg-[#f0f0f0] pb-px">
        <Chevron className="ml-[4px]" />
        <div className="ml-[427px] h-[15px] w-[470px] bg-[#cdcdcd]" />
        <Chevron className="ml-[86px] rotate-180" />
      </div>
      <StatusBar />
      <Taskbar />
      <div className="absolute top-[640px] left-[750px] whitespace-nowrap text-[#777]/50">
        <div className="text-[19px] leading-[27px]">Activate Windows</div>
        <div className="text-[13.500px] leading-[18px] tracking-[0.38px]">Go to Settings to activate Windows.</div>
      </div>
    </div>
  );
}
